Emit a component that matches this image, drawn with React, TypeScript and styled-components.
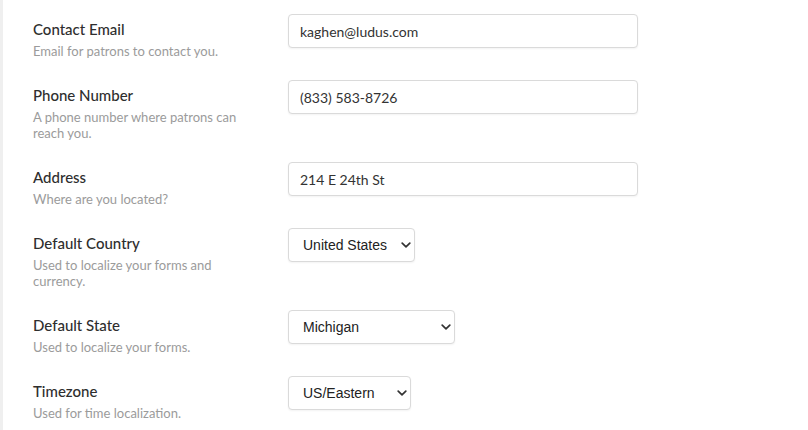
import React from "react";
import styled, { createGlobalStyle } from "styled-components";

const GlobalStyle = createGlobalStyle`
  html, body {
    margin: 0;
    padding: 0;
    background: #ffffff;
  }
  body {
    font-family: "Lato", "Open Sans", sans-serif;
    color: #333333;
  }
  * {
    box-sizing: border-box;
  }
`;

const Page = styled.div`
  display: flex;
  min-height: 430px;
  border-left: 3px solid #efefef;
`;

const Form = styled.form`
  display: flex;
  flex-direction: column;
  gap: 21px;
  margin: 0;
  padding: 14px 0 0 30px;
`;

const Row = styled.div`
  display: grid;
  grid-template-columns: 255px auto;
  align-items: start;
`;

const LabelBlock = styled.div`
  padding: 4px 24px 0 0;
`;

const Title = styled.div`
  height: 22px;
  font-size: 15px;
  line-height: 22px;
  font-weight: 500;
  color: #2e2e2e;
`;

const Hint = styled.div`
  margin-top: 3px;
  font-size: 13px;
  line-height: 16px;
  color: #9b9b9b;
`;

const TextInput = styled.input`
  display: block;
  margin: 0;
  width: 350px;
  height: 34px;
  padding: 0 11px;
  border: 1px solid #dadada;
  border-radius: 4px;
  box-shadow: 0 1px 2px rgba(0, 0, 0, 0.05);
  font-family: "Lato", "Open Sans", sans-serif;
  font-size: 14px;
  color: #333333;
  background: #ffffff;
  outline: none;
`;

const SelectWrap = styled.div<{ $width: number }>`
  position: relative;
  width: ${(p) => p.$width}px;
  height: 34px;
`;

const Select = styled.select`
  display: block;
  margin: 0;
  appearance: none;
  -webkit-appearance: none;
  width: 100%;
  height: 100%;
  padding: 0 24px 0 14px;
  border: 1px solid #dadada;
  border-radius: 4px;
  box-shadow: 0 1px 2px rgba(0, 0, 0, 0.05);
  font-family: "Liberation Sans", Arial, sans-serif;
  font-size: 14px;
  color: #222222;
  background: #ffffff;
  outline: none;
`;

const Chevron = styled.svg`
  position: absolute;
  right: 4px;
  top: 50%;
  width: 10px;
  height: 6px;
  margin-top: -3px;
  pointer-events: none;
`;

type Field =
  | { kind: "text"; title: string; hint: string; value: string }
  | { kind: "select"; title: string; hint: string; value: string; options: string[]; width: number };

const fields: Field[] = [
  { kind: "text", title: "Contact Email", hint: "Email for patrons to contact you.", value: "kaghen@ludus.com" },
  { kind: "text", title: "Phone Number", hint: "A phone number where patrons can reach you.", value: "(833) 583-8726" },
  { kind: "text", title: "Address", hint: "Where are you located?", value: "214 E 24th St" },
  {
    kind: "select",
    title: "Default Country",
    hint: "Used to localize your forms and currency.",
    value: "United States",
    options: ["United States", "Canada", "Mexico"],
    width: 127,
  },
  {
    kind: "select",
    title: "Default State",
    hint: "Used to localize your forms.",
    value: "Michigan",
    options: ["Michigan", "Ohio", "Indiana", "Illinois", "Wisconsin"],
    width: 167,
  },
  {
    kind: "select",
    title: "Timezone",
    hint: "Used for time localization.",
    value: "US/Eastern",
    options: ["US/Eastern", "US/Central", "US/Mountain", "US/Pacific"],
    width: 123,
  },
];

function ChevronIcon() {
  return (
    <Chevron viewBox="0 0 10 6" aria-hidden="true">
      <path d="M1.2 1.2 L5 4.8 L8.8 1.2" fill="none" stroke="#333" strokeWidth="1.7" strokeLinecap="round" strokeLinejoin="round" />
    </Chevron>
  );
}

export default function App() {
  return (
    <>
      <GlobalStyle />
      <Page>
        <Form onSubmit={(e) => e.preventDefault()}>
          {fields.map((f) => (
            <Row key={f.title}>
              <LabelBlock>
                <Title>{f.title}</Title>
                <Hint>{f.hint}</Hint>
              </LabelBlock>
              {f.kind === "text" ? (
                <TextInput type="text" defaultValue={f.value} />
              ) : (
                <SelectWrap $width={f.width}>
                  <Select defaultValue={f.value}>
                    {f.options.map((o) => (
                      <option key={o} value={o}>
                        {o}
                      </option>
                    ))}
                  </Select>
                  <ChevronIcon />
                </SelectWrap>
              )}
            </Row>
          ))}
        </Form>
      </Page>
    </>
  );
}
